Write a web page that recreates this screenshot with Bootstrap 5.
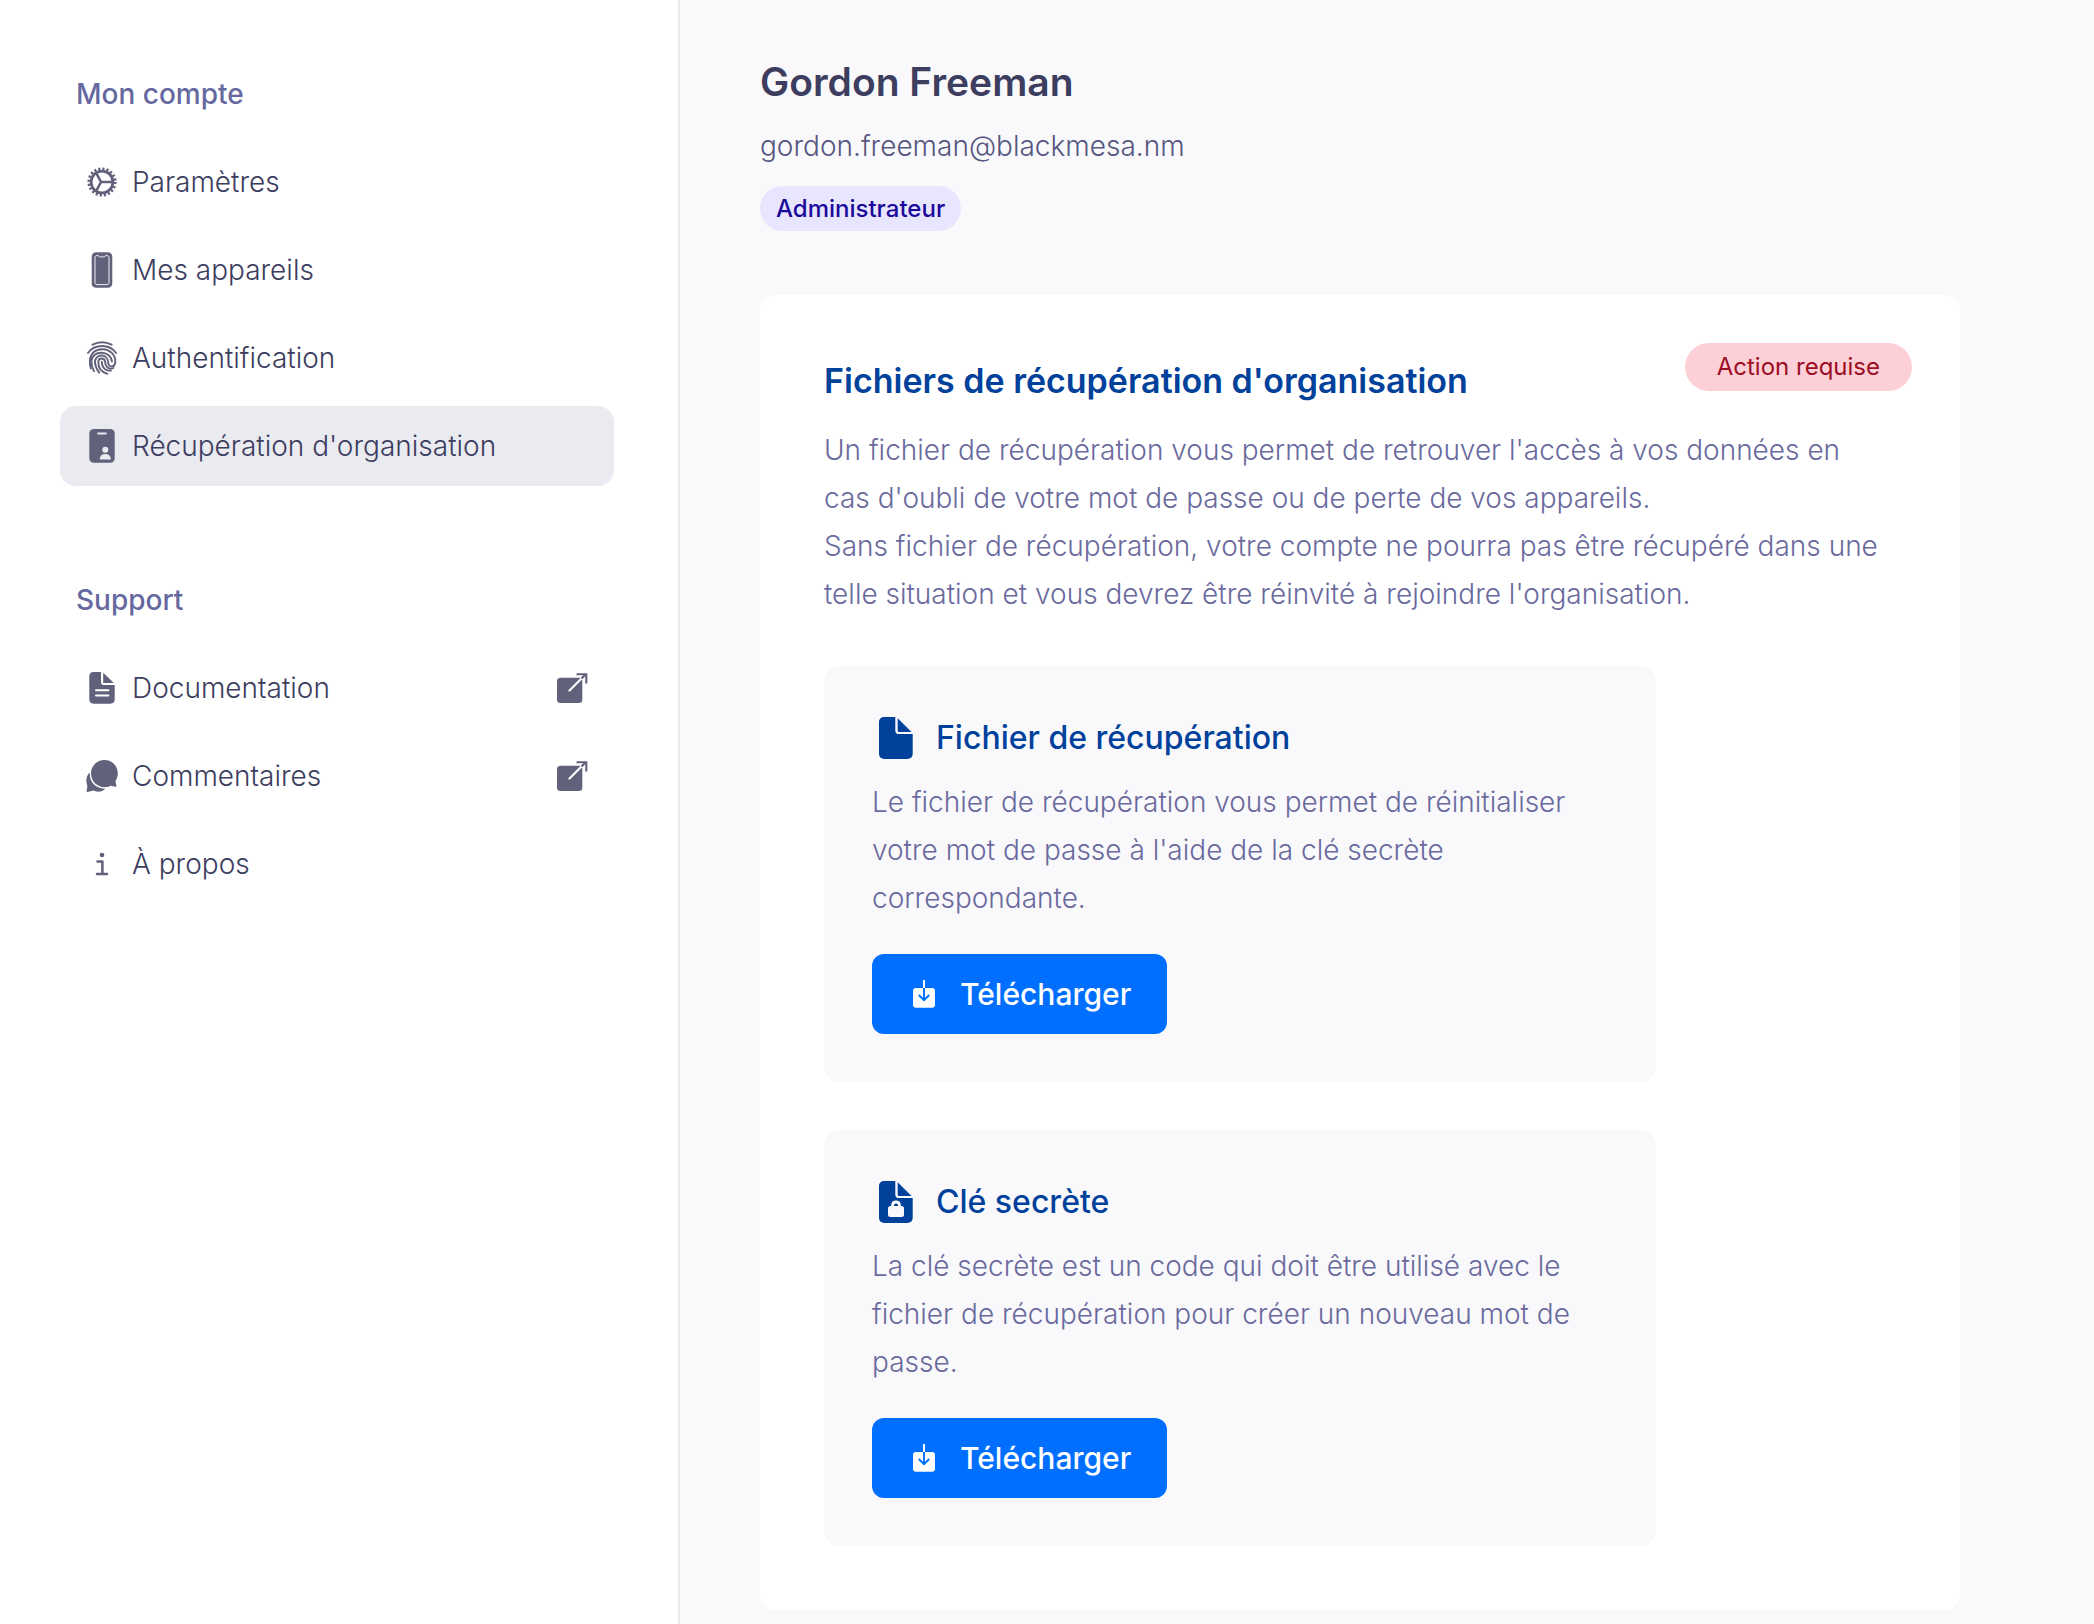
<!DOCTYPE html>
<html lang="fr">
<head>
<meta charset="utf-8">
<meta name="viewport" content="width=device-width, initial-scale=1">
<title>Récupération d'organisation</title>
<link rel="stylesheet" href="https://cdn.jsdelivr.net/npm/bootstrap@5.3.0/dist/css/bootstrap.min.css">
<style>
  body { font-family: Inter, "Liberation Sans", sans-serif; font-size: 28px; line-height: 48px; font-weight: 350; color: #6a6a9e; background: #f9f9fb; }
  .side { width: 680px; padding: 54px 64px 54px 60px; border-right: 2px solid #eaeaf1; }
  .side-title { font-size: 28px; line-height: 80px; font-weight: 500; color: #6668a0; padding-left: 16px; margin: 0 0 8px; }
  .side-list { gap: 8px; }
  .side-list .nav-link { height: 80px; padding: 0 24px; gap: 12px; border-radius: 16px; color: #3d3d60; }
  .side-list .nav-link.active { background: #eaeaf1; }
  .side svg { width: 36px; height: 36px; color: #62617c; }
  .support { margin-top: 74px; }
  .content { padding: 56px 80px 14px; }
  .user-name { font-size: 39px; line-height: 52px; font-weight: 600; color: #3d3d60; }
  .user-mail { line-height: 40px; color: #56567f; margin-top: 18px; }
  .role-tag { font-size: 24px; line-height: 45px; font-weight: 500; color: #1b0a9b; background: #e8e5ff; padding: 0 16px; margin-top: 20px; }
  .panel { max-width: 1200px; margin-top: 64px; padding: 64px; border-radius: 16px; gap: 48px; }
  .panel-title { font-size: 34px; line-height: 44px; font-weight: 600; color: #00419b; margin: 0 0 23px; }
  .state-tag { top: 48px; right: 48px; font-size: 24px; line-height: 48px; font-weight: 400; color: #9c0e24; background: #fdcfd6; padding: 0 32px; }
  .file-box { max-width: 832px; padding: 48px; border-radius: 16px; background: #f9f9fb; }
  .file-title { font-size: 32px; line-height: 48px; font-weight: 500; color: #00419b; gap: 16px; margin: 0 0 16px; }
  .file-title svg { width: 48px; height: 48px; }
  .btn-get { height: 80px; padding: 0 36px; gap: 20px; border: 0; border-radius: 12px; margin-top: 32px; font-size: 30px; font-weight: 500; color: #fff; background: #006fff; }
  .btn-get:hover { color: #fff; background: #005fdb; }
  .btn-get svg { width: 32px; height: 32px; }
</style>
</head>
<body>
<div class="d-flex min-vh-100">
  <aside class="side bg-white flex-shrink-0">
    <h2 class="side-title">Mon compte</h2>
    <nav class="nav flex-column side-list" aria-label="Mon compte">
      <a class="nav-link d-flex align-items-center" href="#">
        <svg viewBox="0 0 36 36" fill="none" stroke="currentColor" aria-hidden="true">
          <circle cx="18" cy="18" r="13" stroke-width="3.2" stroke-dasharray="2.1 1.984"/>
          <circle cx="18" cy="18" r="10.9" stroke-width="2.8"/>
          <path d="M17 18H28M17 18L12.2 9M17 18L12.2 27" stroke-width="2.6"/>
        </svg>
        <span>Paramètres</span>
      </a>
      <a class="nav-link d-flex align-items-center" href="#">
        <svg viewBox="0 0 36 36" fill="none" aria-hidden="true">
          <rect x="7.7" y=".2" width="20.6" height="35.6" rx="4.4" fill="currentColor"/>
          <path d="M13 3.6h1.4c.5 1 .9 1.3 1.8 1.3h3.6c.9 0 1.3-.3 1.8-1.3H23c1.2 0 2 .8 2 2v25c0 1.2-.8 2-2 2H13c-1.2 0-2-.8-2-2v-25c0-1.2.8-2 2-2z" stroke="#fff" stroke-width=".9"/>
        </svg>
        <span>Mes appareils</span>
      </a>
      <a class="nav-link d-flex align-items-center" href="#">
        <svg viewBox="0 0 36 36" fill="none" stroke="currentColor" stroke-width="1.9" stroke-linecap="round" aria-hidden="true">
          <path d="M8.500 4.700C14.500 1.500 21.500 1.500 27.600 4.700"/>
          <path d="M4 13C10.500 3.700 25.600 3.700 32 13"/>
          <path d="M6.800 28.600C4 18 7.600 9.400 17.800 9.200C26 9 31.600 15 31.300 21.600C31 27.800 24.600 28 24.200 22.600C23.600 11.800 10.300 14.500 11 22.500C11.300 27 13 29.800 15.200 32.800"/>
          <path d="M10 31.200C8 27.500 7.300 24 7.400 21.500C8 9 27 10.500 27.900 21.500"/>
          <path d="M23.300 33.800C17.800 32.300 14.300 28 14.300 22C14.300 17.500 20.800 17.200 21.200 22C21.400 27.500 25.500 29.800 29.500 28"/>
          <path d="M17.800 21.800C17.800 27.500 21.500 31.300 27 30.500"/>
        </svg>
        <span>Authentification</span>
      </a>
      <a class="nav-link active d-flex align-items-center" href="#" aria-current="page">
        <svg viewBox="0 0 36 36" fill="none" aria-hidden="true">
          <rect x="5.300" y="1" width="25.400" height="33.800" rx="4.500" fill="currentColor"/>
          <path d="M14.300 5.500h7.400" stroke="#eaeaf1" stroke-width="2.200" stroke-linecap="round"/>
          <circle cx="21.300" cy="21.800" r="3" fill="#eaeaf1"/>
          <path d="M15.700 31.600C16 27.800 18 26 21.300 26s5.300 1.800 5.700 5.600z" fill="#eaeaf1"/>
        </svg>
        <span>Récupération d'organisation</span>
      </a>
    </nav>
    <h2 class="side-title support">Support</h2>
    <nav class="nav flex-column side-list" aria-label="Support">
      <a class="nav-link d-flex align-items-center" href="#">
        <svg viewBox="0 0 36 36" fill="none" aria-hidden="true">
          <path d="M9.500 2H17v10.500c0 1.500 1 2.500 2.500 2.500h11.200v14.600c0 2.600-1.500 4.100-4.100 4.100H9.500c-2.700 0-4.200-1.500-4.200-4.100V6.200C5.300 3.500 6.800 2 9.500 2z" fill="currentColor"/>
          <path d="M19.200 2.700L29.900 13H19.200z" fill="currentColor"/>
          <path d="M12 20.200h12.400M12 25.500h12.400" stroke="#fff" stroke-width="2" stroke-linecap="round"/>
        </svg>
        <span>Documentation</span>
        <svg class="ms-auto" viewBox="0 0 36 36" fill="none" aria-hidden="true">
          <rect x="3" y="7.800" width="25.300" height="25.200" rx="3.500" fill="currentColor"/>
          <path d="M15.500 20.500L29.500 6.500" stroke="#fff" stroke-width="2.200" stroke-linecap="round"/>
          <path d="M27.500 8.600L32 4.100M22.500 4.300H32.300V13.500" stroke="currentColor" stroke-width="2.100"/>
        </svg>
      </a>
      <a class="nav-link d-flex align-items-center" href="#">
        <svg viewBox="0 0 36 36" fill="currentColor" aria-hidden="true">
          <path d="M5.800 14.500C3 17 1.400 21.500 3 26.500c.4 1.300.3 2.300.1 3.500l-.5 3c-.1.700.4 1 1 .9l4.700-1.200c1-.2 1.700 0 2.700.4 3.500 1.100 7.500.6 10.300-2.300C13.500 30.500 5 25.500 5.800 14.500z"/>
          <path d="M20.500 2C28 2 33.800 8 33.800 15.300c0 3.200-1 5.400-1.900 7-.5 1-.4 1.500-.2 2.500l.7 2.800c.2.900-.3 1.300-1.100 1.100l-3.500-.8c-.9-.2-1.500 0-2.300.4-1.500.6-3 .9-5 .9C13 29.200 7 23 7 15.500S13 2 20.500 2z"/>
        </svg>
        <span>Commentaires</span>
        <svg class="ms-auto" viewBox="0 0 36 36" fill="none" aria-hidden="true">
          <rect x="3" y="7.800" width="25.300" height="25.200" rx="3.500" fill="currentColor"/>
          <path d="M15.500 20.500L29.500 6.500" stroke="#fff" stroke-width="2.200" stroke-linecap="round"/>
          <path d="M27.500 8.600L32 4.100M22.500 4.300H32.300V13.500" stroke="currentColor" stroke-width="2.100"/>
        </svg>
      </a>
      <a class="nav-link d-flex align-items-center" href="#">
        <svg viewBox="0 0 36 36" fill="none" stroke="currentColor" stroke-width="2.500" stroke-linecap="round" stroke-linejoin="round" aria-hidden="true">
          <circle cx="18" cy="9" r="2.300" fill="currentColor" stroke="none"/>
          <path d="M13.500 15.600h4.900v12.200M13 28h10"/>
        </svg>
        <span>À propos</span>
      </a>
    </nav>
  </aside>

  <main class="content flex-grow-1 d-flex flex-column">
    <header class="d-flex flex-column align-items-start">
      <h1 class="user-name mb-0">Gordon Freeman</h1>
      <span class="user-mail">gordon.freeman@blackmesa.nm</span>
      <span class="role-tag rounded-pill">Administrateur</span>
    </header>
    <section class="panel bg-white position-relative d-flex flex-column">
      <span class="state-tag rounded-pill position-absolute">Action requise</span>
      <div>
        <h2 class="panel-title">Fichiers de récupération d'organisation</h2>
        <p class="mb-0">Un fichier de récupération vous permet de retrouver l'accès à vos données en<br>cas d'oubli de votre mot de passe ou de perte de vos appareils.<br>Sans fichier de récupération, votre compte ne pourra pas être récupéré dans une<br>telle situation et vous devrez être réinvité à rejoindre l'organisation.</p>
      </div>
      <article class="file-box">
        <h3 class="file-title d-flex align-items-center">
          <svg viewBox="0 0 48 48" fill="currentColor" aria-hidden="true">
            <path d="M12.500 3H23.300v13.200c0 2.600 1.300 3.900 3.900 3.900h13.500v19.500c0 3.500-2 5.400-5.500 5.400H12.500C9 45 7 43.100 7 39.600V8.400C7 4.900 9 3 12.500 3z"/>
            <path d="M25.700 4.300L39.500 18H27.300c-1.100 0-1.600-.5-1.600-1.600z"/>
          </svg>
          <span>Fichier de récupération</span>
        </h3>
        <p class="mb-0">Le fichier de récupération vous permet de réinitialiser<br>votre mot de passe à l'aide de la clé secrète<br>correspondante.</p>
        <button type="button" class="btn btn-get d-flex align-items-center">
          <svg viewBox="0 0 32 32" fill="none" aria-hidden="true">
            <rect x="5" y="10" width="22" height="19.700" rx="3" fill="#fff"/>
            <path d="M16 2v8" stroke="#fff" stroke-width="1.900"/>
            <path d="M16 10v12M10.800 17l5.200 5.200L21.200 17" stroke="#006fff" stroke-width="1.900"/>
          </svg>
          <span>Télécharger</span>
        </button>
      </article>
      <article class="file-box">
        <h3 class="file-title d-flex align-items-center">
          <svg viewBox="0 0 48 48" fill="currentColor" aria-hidden="true">
            <path d="M12.500 3H23.300v13.200c0 2.600 1.300 3.900 3.900 3.900h13.500v19.500c0 3.500-2 5.400-5.500 5.400H12.500C9 45 7 43.100 7 39.600V8.400C7 4.900 9 3 12.500 3z"/>
            <path d="M25.700 4.300L39.500 18H27.300c-1.100 0-1.600-.5-1.600-1.600z"/>
            <rect x="16" y="28" width="16" height="11" rx="2.500" fill="#f9f9fb"/>
            <path d="M20.600 29.500v-2.300c0-4.300 6.800-4.300 6.800 0v2.300" fill="none" stroke="#f9f9fb" stroke-width="2.800"/>
          </svg>
          <span>Clé secrète</span>
        </h3>
        <p class="mb-0">La clé secrète est un code qui doit être utilisé avec le<br>fichier de récupération pour créer un nouveau mot de<br>passe.</p>
        <button type="button" class="btn btn-get d-flex align-items-center">
          <svg viewBox="0 0 32 32" fill="none" aria-hidden="true">
            <rect x="5" y="10" width="22" height="19.700" rx="3" fill="#fff"/>
            <path d="M16 2v8" stroke="#fff" stroke-width="1.900"/>
            <path d="M16 10v12M10.800 17l5.200 5.200L21.200 17" stroke="#006fff" stroke-width="1.900"/>
          </svg>
          <span>Télécharger</span>
        </button>
      </article>
    </section>
  </main>
</div>
<script src="https://cdn.jsdelivr.net/npm/bootstrap@5.3.0/dist/js/bootstrap.bundle.min.js"></script>
</body>
</html>
